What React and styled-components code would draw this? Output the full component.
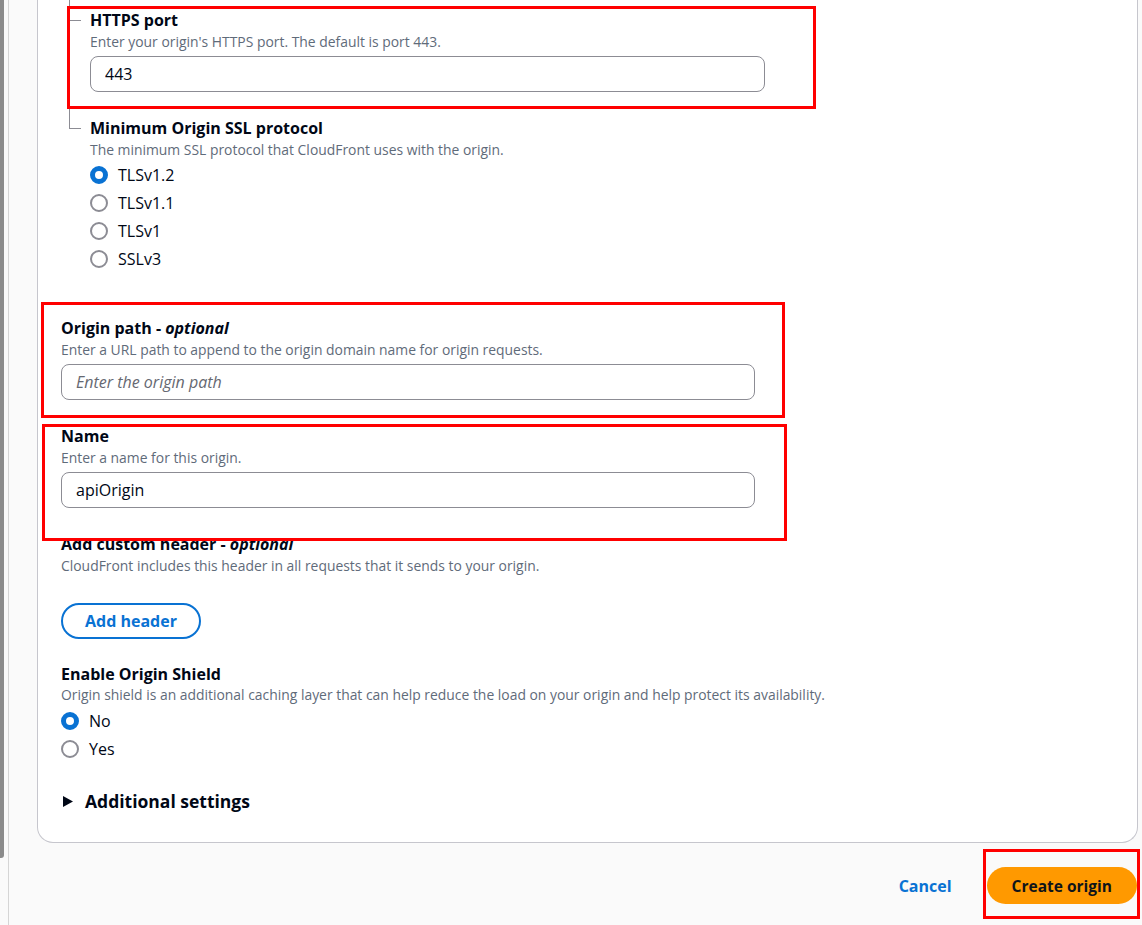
import React from "react";
import styled, { createGlobalStyle } from "styled-components";

const GlobalStyle = createGlobalStyle`
  html, body {
    margin: 0;
    padding: 0;
    background: #fafafa;
  }
  body {
    font-family: "Open Sans", "Noto Sans", sans-serif;
    color: #000716;
  }
  * {
    box-sizing: border-box;
  }
`;

const sslOptions = ["TLSv1.2", "TLSv1.1", "TLSv1", "SSLv3"];
const shieldOptions = ["No", "Yes"];

const Radio = ({ checked, children }) => (
  <RadioRow>
    <RadioCircle $checked={checked} />
    <RadioText>{children}</RadioText>
  </RadioRow>
);

const App = () => {
  return (
    <Page>
      <GlobalStyle />
      <Shell>
        <SideStrip>
          <ScrollThumb />
        </SideStrip>
        <Main>
          <Card>
            <NestedGroup>
              <NestedItem>
                <Label>HTTPS port</Label>
                <Description>Enter your origin's HTTPS port. The default is port 443.</Description>
                <Input $width={675} defaultValue="443" />
              </NestedItem>
              <NestedItem>
                <Label>Minimum Origin SSL protocol</Label>
                <Description>The minimum SSL protocol that CloudFront uses with the origin.</Description>
                <RadioList>
                  {sslOptions.map((opt, i) => (
                    <Radio key={opt} checked={i === 0}>
                      {opt}
                    </Radio>
                  ))}
                </RadioList>
              </NestedItem>
            </NestedGroup>

            <Field>
              <Label>
                Origin path - <em>optional</em>
              </Label>
              <Description>Enter a URL path to append to the origin domain name for origin requests.</Description>
              <Input $width={694} placeholder="Enter the origin path" />
            </Field>

            <Field>
              <Label>Name</Label>
              <Description>Enter a name for this origin.</Description>
              <Input $width={694} defaultValue="apiOrigin" />
            </Field>

            <Field $gap={24}>
              <Label>
                Add custom header - <em>optional</em>
              </Label>
              <Description>CloudFront includes this header in all requests that it sends to your origin.</Description>
              <OutlineButton>Add header</OutlineButton>
            </Field>

            <Field>
              <Label>Enable Origin Shield</Label>
              <Description $tight>
                Origin shield is an additional caching layer that can help reduce the load on your origin and help
                protect its availability.
              </Description>
              <RadioList $tight>
                {shieldOptions.map((opt, i) => (
                  <Radio key={opt} checked={i === 0}>
                    {opt}
                  </Radio>
                ))}
              </RadioList>
            </Field>

            <Expander>
              <svg width="10" height="11" viewBox="0 0 10 11">
                <polygon points="0,0 10,5.5 0,11" fill="#000716" />
              </svg>
              <span>Additional settings</span>
            </Expander>
          </Card>

          <Footer>
            <LinkButton>Cancel</LinkButton>
            <PrimaryButton>Create origin</PrimaryButton>
          </Footer>
        </Main>
      </Shell>

      <Highlight $x={67} $y={6} $w={749} $h={103} />
      <Highlight $x={41} $y={302} $w={744} $h={116} />
      <Highlight $x={42} $y={424} $w={745} $h={117} />
      <Highlight $x={983} $y={849} $w={157} $h={70} />
    </Page>
  );
};

export default App;

const Page = styled.div`
  position: relative;
  width: 1142px;
  height: 925px;
  overflow: hidden;
`;

const Shell = styled.div`
  display: flex;
  height: 100%;
`;

const SideStrip = styled.div`
  width: 9px;
  flex-shrink: 0;
  border-right: 1px solid #d5d5d5;
  background: #fafafa;
`;

const ScrollThumb = styled.div`
  width: 4px;
  height: 858px;
  background: #8b8b8b;
  border-radius: 0 0 3px 0;
`;

const Main = styled.div`
  flex: 1;
  padding: 0 4px 0 28px;
  display: flex;
  flex-direction: column;
`;

const Card = styled.section`
  background: #fff;
  border: 1px solid #c6c6cd;
  border-top: none;
  border-radius: 0 0 16px 16px;
  padding: 0 23px 29px;
  display: flex;
  flex-direction: column;
`;

const NestedGroup = styled.div`
  margin-left: 8px;
  margin-bottom: 32px;
`;

const NestedItem = styled.div`
  position: relative;
  padding: 9px 0 16px 21px;
  color: #000716;

  &::before {
    content: "";
    position: absolute;
    left: 0;
    top: 20px;
    width: 12px;
    border-top: 1px solid #8c8c94;
  }

  &::after {
    content: "";
    position: absolute;
    left: 0;
    top: 0;
    bottom: 0;
    border-left: 1px solid #8c8c94;
  }

  &:last-child::after {
    bottom: auto;
    height: 21px;
  }
`;

const Field = styled.div`
  display: flex;
  flex-direction: column;
  align-items: flex-start;
  margin-bottom: ${(p) => p.$gap ?? 25}px;
`;

const Label = styled.div`
  font-size: 16px;
  font-weight: 700;
  line-height: 22px;
  color: #000716;

  em {
    font-style: italic;
  }
`;

const Description = styled.div`
  margin-top: ${(p) => (p.$tight ? "0" : "1px")};
  font-size: 13.9px;
  line-height: 20px;
  color: #5f6b7a;
`;

const Input = styled.input`
  display: block;
  margin-top: 4px;
  width: ${(p) => p.$width}px;
  height: 36px;
  padding: 0 14px;
  border: 1px solid #8c8c94;
  border-radius: 8px;
  background: #fff;
  font-family: inherit;
  font-size: 16px;
  color: #000716;
  outline: none;

  &::placeholder {
    color: #656871;
    font-style: italic;
  }
`;

const RadioList = styled.div`
  display: flex;
  flex-direction: column;
  gap: 8px;
  margin-top: ${(p) => (p.$tight ? "6px" : "5px")};
`;

const RadioRow = styled.label`
  display: flex;
  align-items: center;
  gap: 10px;
  height: 20px;
`;

const RadioCircle = styled.span`
  width: 18px;
  height: 18px;
  border-radius: 50%;
  background: #fff;
  border: ${(p) => (p.$checked ? "5px solid #0972d3" : "2px solid #8c8c94")};
`;

const RadioText = styled.span`
  font-size: 16px;
  line-height: 20px;
  color: #000716;
`;

const OutlineButton = styled.button`
  margin-top: 27px;
  height: 36px;
  padding: 0 22px;
  border: 2px solid #0972d3;
  border-radius: 20px;
  background: #fff;
  color: #0972d3;
  font-family: inherit;
  font-size: 16px;
  font-weight: 700;
`;

const Expander = styled.div`
  display: flex;
  align-items: center;
  gap: 12px;
  margin-top: 5px;
  padding-left: 2px;
  font-size: 17.5px;
  line-height: 24px;
  font-weight: 700;
  color: #000716;
`;

const Footer = styled.div`
  display: flex;
  justify-content: flex-end;
  align-items: center;
  gap: 15px;
  padding-top: 24px;
  padding-right: 1px;
`;

const LinkButton = styled.button`
  border: none;
  background: none;
  padding: 0 20px;
  height: 36px;
  font-family: inherit;
  font-size: 16px;
  font-weight: 700;
  color: #0972d3;
`;

const PrimaryButton = styled.button`
  height: 37px;
  padding: 0 25px;
  border: none;
  border-radius: 20px;
  background: #ff9900;
  color: #0f141a;
  font-family: inherit;
  font-size: 15.5px;
  font-weight: 700;
`;

const Highlight = styled.div`
  position: absolute;
  left: ${(p) => p.$x}px;
  top: ${(p) => p.$y}px;
  width: ${(p) => p.$w}px;
  height: ${(p) => p.$h}px;
  border: 3px solid #ff0000;
  pointer-events: none;
`;
